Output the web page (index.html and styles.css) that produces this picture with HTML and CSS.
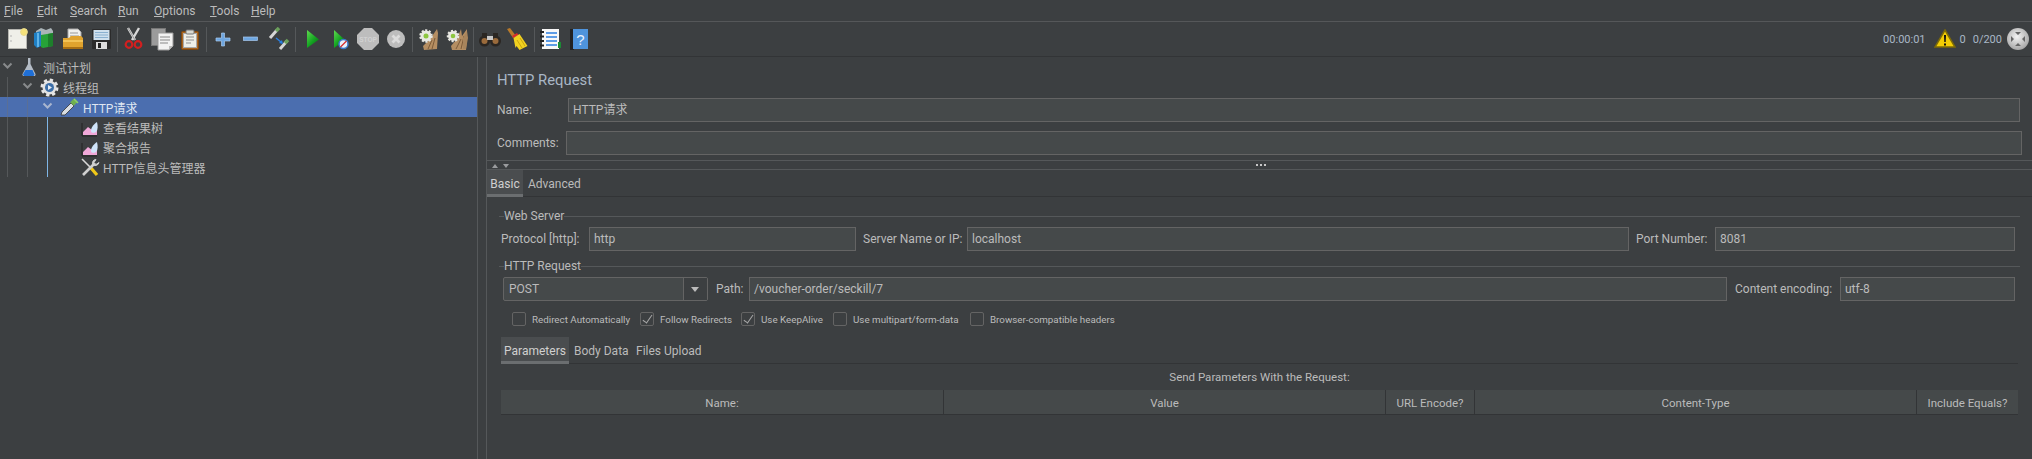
FILE: index.html
```html
<!DOCTYPE html>
<html lang="en">
<head>
<meta charset="utf-8">
<title>Apache JMeter</title>
<link rel="stylesheet" href="styles.css">
</head>
<body>
<nav class="menubar">
  <span class="m-file"><u>F</u>ile</span><span class="m-edit"><u>E</u>dit</span><span class="m-search"><u>S</u>earch</span><span class="m-run"><u>R</u>un</span><span class="m-options"><u>O</u>ptions</span><span class="m-tools"><u>T</u>ools</span><span><u>H</u>elp</span>
</nav>
<div class="toolbar">
  <svg width="27" height="24" viewBox="-4 0 27 24"><rect x="0.5" y="2.5" width="18" height="19" fill="#efefe9" stroke="#b5b5b0"/><circle cx="3" cy="9" r=".8" fill="#aaa"/><circle cx="3" cy="14" r=".8" fill="#aaa"/><circle cx="16" cy="5" r="3.400" fill="#f5e27a" stroke="#e8d98a"/></svg>
  <svg width="28" height="24" viewBox="-3 0 28 24"><path d="M2 4l5-3 5 2 5-2 2 3v5H2z" fill="#aab4b8"/><path d="M0 6l7-2v15l-4 2-3-3z" fill="#1f7fc4"/><path d="M3 6h2v14H3z" fill="#5fb3e8"/><path d="M7 8l12-2v13l-10 2-2-1z" fill="#27a238"/><path d="M14 7l5-1v13l-5 1z" fill="#1d7f2b"/></svg>
  <svg width="28" height="24" viewBox="-4 0 28 24"><path d="M5 2h10l3 3v8H5z" fill="#f0f0ec" stroke="#aaa"/><path d="M7 6h8M7 9h9" stroke="#999"/><path d="M0 11h6l2-2h10l2 2v9a2 2 0 0 1-2 2H2a2 2 0 0 1-2-2z" fill="#e0a32e"/><path d="M0 13h20v2H0z" fill="#f2c255"/><path d="M0 20h20v2H0z" fill="#a86f14"/></svg>
  <svg width="29" height="24" viewBox="-5 0 29 24"><rect x="0" y="2" width="19" height="20" rx="1" fill="#2b2b2b"/><rect x="1.5" y="3" width="16" height="10" fill="#cfe0ee"/><path d="M3 5.500h13M3 8h13M3 10.500h13" stroke="#8ab0d0"/><rect x="4" y="15" width="11" height="7" fill="#ddd"/><rect x="6" y="16" width="3" height="5" fill="#222"/></svg>
  <i class="sep"></i>
  <svg width="29" height="24" viewBox="-6 0 29 24"><path d="M3 1l7 12M14 1L7 13" stroke="#d8d8d8" stroke-width="2.400"/><path d="M3 1l7 12" stroke="#8a8a8a" stroke-width=".8"/><circle cx="4" cy="17.500" r="3.300" fill="none" stroke="#d21f1f" stroke-width="2.200"/><circle cx="13" cy="17.500" r="3.300" fill="none" stroke="#d21f1f" stroke-width="2.200"/></svg>
  <svg width="29" height="24" viewBox="-3 0 29 24"><rect x="0.500" y="1.500" width="14" height="17" fill="#9b9b9b" stroke="#777"/><path d="M7 6h15v13l-4 4H7z" fill="#f2f2f2" stroke="#999"/><path d="M9 10h10M9 13h10M9 16h8" stroke="#888"/><path d="M18 23v-4h4z" fill="#bbb"/></svg>
  <svg width="28" height="24" viewBox="-4 0 28 24"><rect x="0.500" y="4.500" width="17" height="18" rx="1" fill="#a9651f" stroke="#7c4712"/><rect x="2.500" y="6.500" width="13" height="14" fill="#efefe8" stroke="#aaa"/><rect x="5" y="3" width="8" height="4" rx="1" fill="#d9d9d2" stroke="#777"/><path d="M5 10h8M5 13h8M5 16h5" stroke="#8f8f8f"/></svg>
  <i class="sep"></i>
  <svg width="29" height="24" viewBox="-8 0 29 24"><path d="M5.500 6h3v5h5.500v3H8.500v5h-3v-5H0v-3h5.500z" fill="#6ea6e0" stroke="#a8c9ee" stroke-width=".7"/></svg>
  <svg width="28" height="24" viewBox="-6 0 28 24"><rect x="0.500" y="10" width="14" height="3.500" fill="#6ea6e0" stroke="#a8c9ee" stroke-width=".7"/></svg>
  <svg width="29" height="24" viewBox="-4 0 29 24"><path d="M1 11l7-8" stroke="#d6d6d6" stroke-width="3"/><path d="M7 4l3-3" stroke="#6ca05c" stroke-width="3.500"/><path d="M11 22l7-8" stroke="#d6d6d6" stroke-width="3"/><path d="M16 16l3-3" stroke="#6ca05c" stroke-width="3.500"/><path d="M7 11l5 4" stroke="#2a7fe0" stroke-width="1.500"/><path d="M14 17l-1-4-3 3z" fill="#2a7fe0"/></svg>
  <i class="sep"></i>
  <svg width="30" height="24" viewBox="-10 0 30 24"><defs><linearGradient id="pl" x1="0" y1="0" x2=".8" y2="1"><stop offset="0" stop-color="#5fdc4e"/><stop offset=".6" stop-color="#14a322"/><stop offset="1" stop-color="#0a6a14"/></linearGradient></defs><path d="M0 3l12 9.500L0 21z" fill="url(#pl)"/></svg>
  <svg width="27" height="24" viewBox="-7 0 27 24"><path d="M0 3l11 10L0 21z" fill="url(#pl)"/><circle cx="9.500" cy="17" r="4.500" fill="#e8f0fa" stroke="#3a78c8" stroke-width="1.500"/><path d="M6.500 20l6-6" stroke="#d62c2c" stroke-width="1.300"/></svg>
  <svg width="29" height="24" viewBox="-3 0 29 24"><path d="M7 1h8l7 7v8l-7 7H7l-7-7V8z" fill="#bdbdbd"/><text x="11" y="14.500" class="stop-text" text-anchor="middle">STOP</text></svg>
  <svg width="28" height="24" viewBox="-4 0 28 24"><circle cx="9" cy="12" r="9" fill="#bdbdbd"/><path d="M5.500 8.500l7 7m0-7l-7 7" stroke="#dcdcdc" stroke-width="2.800"/></svg>
  <i class="sep"></i>
  <svg width="28" height="24" viewBox="-4 0 28 24"><path d="M19 2l1 4-1 16-13 1-1-4 7-7z" fill="#b58e62"/><path d="M10 22l4-9M14 22l3-11" stroke="#7c5b39"/><circle cx="8" cy="9" r="5.500" fill="#e8e8e2" stroke="#e8e8e2" stroke-width="2.500" stroke-dasharray="2 1.500"/><circle cx="8" cy="9" r="2.500" fill="#8cc63f"/></svg>
  <svg width="30" height="24" viewBox="-4 0 30 24"><path d="M6 23l-1-4 6-7 4-10 1 7 5-7v11l-1 10z" fill="#b58e62"/><path d="M10 22l5-10M15 22l3-13" stroke="#7c5b39"/><path d="M17 11l4-7 1 7-2 11h-3z" fill="#a9855c"/><circle cx="7" cy="9" r="5" fill="#e8e8e2" stroke="#e8e8e2" stroke-width="2.500" stroke-dasharray="2 1.500"/><circle cx="7" cy="9" r="2.300" fill="#8cc63f"/></svg>
  <i class="sep"></i>
  <svg width="29" height="24" viewBox="-4 0 29 24"><circle cx="5.500" cy="14" r="5.500" fill="#2a2622"/><circle cx="16.500" cy="14" r="5.500" fill="#2a2622"/><circle cx="5.500" cy="14" r="3" fill="#9a6b3c"/><circle cx="16.500" cy="14" r="3" fill="#9a6b3c"/><rect x="3" y="6" width="5" height="5" fill="#2a2622"/><rect x="14" y="6" width="5" height="5" fill="#2a2622"/><rect x="8" y="9" width="6" height="4" fill="#c8c8c8"/></svg>
  <svg width="29" height="24" viewBox="-2 0 29 24"><path d="M1 2l3-1 6 8-3 2z" fill="#b97a2a"/><path d="M6 9l5-3 1.500 2-5 3z" fill="#d62c2c"/><path d="M7.500 11l6-4 8 12-8 4-3-4-1 2z" fill="#f2d21f"/><path d="M11 13l5 8M14 11l5 8" stroke="#c8a412"/></svg>
  <i class="sep"></i>
  <svg width="30" height="24" viewBox="-4 0 30 24"><rect x="2" y="2" width="17" height="20" fill="#f7f7f7"/><path d="M6 6h11M6 10h11M6 14h11M6 18h11" stroke="#2d7fe0" stroke-width="1.500"/><path d="M0 5h4M0 9.500h4M0 14h4M0 18.500h4" stroke="#222" stroke-width="2"/><rect x="18" y="15" width="3" height="6" fill="#1c8a35"/></svg>
  <svg width="29" height="24" viewBox="-4 0 29 24"><rect x="0" y="2" width="4" height="21" fill="#222"/><rect x="3" y="2" width="15" height="20" fill="#4f94dc"/><text x="10.500" y="18" class="help-text" text-anchor="middle">?</text></svg>
  <div class="status">
    <span class="time">00:00:01</span>
    <svg width="22" height="20" viewBox="0 0 22 20"><path d="M11 1l10 17H1z" fill="#f3cd05" stroke="#7c6a08" stroke-width="1.500"/><path d="M10 6h2l-.3 7h-1.400zM10 14.500h2v2h-2z" fill="#111"/></svg>
    <span class="warn-count">0</span>
    <span class="threads">0/200</span>
    <svg width="22" height="22" viewBox="0 0 22 22"><defs><radialGradient id="gl" cx=".45" cy=".4" r=".7"><stop offset="0" stop-color="#f4f4f4"/><stop offset="1" stop-color="#9a9a9a"/></radialGradient></defs><circle cx="11" cy="11" r="11" fill="url(#gl)"/><path d="M8 4h6l-3 3zM8 18h6l-3-3zM4 8v6l3-3zM18 8v6l-3-3z" fill="#666"/></svg>
  </div>
</div>
<div class="workspace">
  <aside class="tree">
    <div class="row">
      <svg class="chev" width="20" height="20" viewBox="0 0 20 20"><path d="M3.500 6.500l4 4 4-4"/></svg>
      <svg class="node" width="23" height="20" viewBox="0 0 23 20"><path d="M8 1h2.500v6l5 10a1.500 1.500 0 0 1-1.500 2H4a1.500 1.500 0 0 1-1.500-2l5.500-10z" fill="#b4bcc6"/><path d="M5.500 13h7l2 4.500-1 1.500H4l-1-1.500z" fill="#1f6fd6"/></svg>
      <span>测试计划</span>
    </div>
    <div class="row">
      <i class="guide"></i>
      <svg class="chev" width="20" height="20" viewBox="0 0 20 20"><path d="M3.500 6.500l4 4 4-4"/></svg>
      <svg class="node" width="23" height="20" viewBox="0 0 23 20"><circle cx="9.500" cy="10.500" r="7" fill="#dcdcdc" stroke="#e6e6e6" stroke-width="4" stroke-dasharray="3 2.500"/><circle cx="9.500" cy="10.500" r="6.500" fill="#e2e2e2"/><circle cx="9.500" cy="10.500" r="4.500" fill="#3d6fa8"/><path d="M8 8l4 2.500-4 2.500z" fill="#e8eef5"/></svg>
      <span>线程组</span>
    </div>
    <div class="row selected">
      <i class="guide"></i><i class="guide"></i>
      <svg class="chev" width="20" height="20" viewBox="0 0 20 20"><path d="M3.500 6.500l4 4 4-4"/></svg>
      <svg class="node" width="23" height="20" viewBox="0 0 23 20"><path d="M1 18l1-3L11 6l3 3-9 9z" fill="#d8dde2" stroke="#333" stroke-width=".8"/><path d="M12 7l4-4" stroke="#6fb04e" stroke-width="5"/><path d="M14 2l4 4" stroke="#8fd06a" stroke-width="1.500"/></svg>
      <span>HTTP请求</span>
    </div>
    <div class="row">
      <i class="guide"></i><i class="guide"></i><i class="guide blue"></i><i class="indent"></i>
      <svg class="node" width="23" height="20" viewBox="0 0 23 20"><path d="M2 6v13h15" fill="none" stroke="#222"/><path d="M3 18v-3l5-5 4 3h5v5z" fill="#f0a8d8"/><path d="M11 14c0-4 3-7 6-9 1 4 1 8-1 10-2 1.500-5 1-5-1z" fill="#cfe4fa"/></svg>
      <span>查看结果树</span>
    </div>
    <div class="row">
      <i class="guide"></i><i class="guide"></i><i class="guide blue"></i><i class="indent"></i>
      <svg class="node" width="23" height="20" viewBox="0 0 23 20"><path d="M2 6v13h15" fill="none" stroke="#222"/><path d="M3 18v-3l5-5 4 3h5v5z" fill="#f0a8d8"/><path d="M11 14c0-4 3-7 6-9 1 4 1 8-1 10-2 1.500-5 1-5-1z" fill="#cfe4fa"/></svg>
      <span>聚合报告</span>
    </div>
    <div class="row">
      <i class="guide"></i><i class="guide"></i><i class="guide blue"></i><i class="indent"></i>
      <svg class="node" width="23" height="20" viewBox="0 0 23 20"><path d="M2 2l9 9" stroke="#d8d8d8" stroke-width="1.600"/><path d="M11 11l6 7" stroke="#f0c818" stroke-width="3.200"/><path d="M3 18L14 7" stroke="#d0d0d0" stroke-width="2.600"/><path d="M13 8a4 4 0 0 1 1-5l2-.500-2 3 2 2 3-2a4 4 0 0 1-6 2.500z" fill="#d0d0d0" stroke="#d0d0d0"/></svg>
      <span>HTTP信息头管理器</span>
    </div>
  </aside>
  <main class="detail">
    <h1 class="title">HTTP Request</h1>
    <div class="name-row"><label class="name-label">Name:</label><div class="field">HTTP请求</div></div>
    <div class="comments-row"><label class="comments-label">Comments:</label><div class="field"></div></div>
    <div class="split">
      <span class="arrows"><i class="up"></i><i class="down"></i></span>
      <span class="grip"></span>
    </div>
    <div class="tabs outer-tabs">
      <span class="tab active basic">Basic</span><span class="tab adv">Advanced</span>
    </div>
    <section class="group">
      <div class="legend"><span>Web Server</span></div>
      <div class="fields server-fields">
        <label class="l-protocol">Protocol [http]:</label><div class="field protocol">http</div>
        <label class="l-server">Server Name or IP:</label><div class="field server">localhost</div>
        <label class="l-port">Port Number:</label><div class="field port">8081</div>
      </div>
      <div class="legend second"><span>HTTP Request</span></div>
      <div class="fields request-fields">
        <div class="combo"><span>POST</span><b class="combo-arrow"></b></div>
        <label class="l-path">Path:</label><div class="field path">/voucher-order/seckill/7</div>
        <label class="l-encoding">Content encoding:</label><div class="field encoding">utf-8</div>
      </div>
    </section>
    <div class="checks">
      <span class="check c1"><i></i>Redirect Automatically</span>
      <span class="check c2"><i class="on"></i>Follow Redirects</span>
      <span class="check c3"><i class="on"></i>Use KeepAlive</span>
      <span class="check c4"><i></i>Use multipart/form-data</span>
      <span class="check"><i></i>Browser-compatible headers</span>
    </div>
    <section class="params">
      <div class="tabs inner-tabs">
        <span class="tab active parameters">Parameters</span><span class="tab body-tab">Body Data</span><span class="tab files-tab">Files Upload</span>
      </div>
      <div class="caption">Send Parameters With the Request:</div>
      <div class="table-head">
        <span>Name:</span><span>Value</span><span>URL Encode?</span><span>Content-Type</span><span>Include Equals?</span>
      </div>
    </section>
  </main>
</div>
</body>
</html>
```

FILE: styles.css
```css
* { box-sizing: border-box; }
html, body { margin: 0; height: 100%; }
body {
  width: 2032px;
  height: 459px;
  overflow: hidden;
  background: #3c3f41;
  color: #bbbbbb;
  font: 12px Roboto, "Noto Sans CJK SC", sans-serif;
}
i { font-style: normal; display: block; }
label { white-space: nowrap; flex: none; }

.menubar {
  height: 22px;
  display: flex;
  align-items: center;
  padding-left: 4px;
  border-bottom: 1px solid #555759;
  font-size: 12px;
}
.m-file { width: 33px; }
.m-edit { width: 33px; }
.m-search { width: 48px; }
.m-run { width: 36px; }
.m-options { width: 56px; }
.m-tools { width: 41px; }
.toolbar {
  height: 35px;
  display: flex;
  align-items: center;
  padding-left: 4px;
  border-bottom: 1px solid #323436;
}
.toolbar svg { flex: none; display: block; }
.sep { width: 1px; height: 25px; margin: 0 1px; background: #55585a; flex: none; }
.stop-text { font: bold 6.500px "Liberation Sans", sans-serif; fill: #d2d2d2; }
.help-text { font: 15px "Liberation Sans", sans-serif; fill: #e8f2fc; }
.status { margin-left: auto; display: flex; align-items: center; padding-right: 3px; font-size: 11px; color: #a9b7c6; }
.time { margin-right: 8px; }
.warn-count { margin: 0 7px 0 4px; }
.threads { margin-right: 5px; }

.workspace { display: flex; height: 402px; }
.tree { width: 477px; flex: none; }
.row { display: flex; align-items: center; height: 20px; }
.row span { white-space: nowrap; padding-top: 1px; }
.row svg { flex: none; }
.selected { background: #4b6eaf; color: #dfe6f2; }
.guide {
  width: 20px;
  height: 20px;
  flex: none;
  background: linear-gradient(#55585a, #55585a) 7px 0 / 1px 100% no-repeat;
}
.guide.blue { background-image: linear-gradient(#7fb6e6, #7fb6e6); }
.selected .guide { background-image: linear-gradient(#5a6f96, #5a6f96); }
.indent { width: 20px; flex: none; }
.chev path { fill: none; stroke: #888a8c; stroke-width: 2; }
.selected .chev path { stroke: #a9b6cf; }

.detail {
  flex: 1;
  border-left: 1px solid #55585a;
  padding-left: 9px;
  background: linear-gradient(#55585a, #55585a) 8px 0 / 1px 100% no-repeat;
  min-width: 0;
  display: flex;
  flex-direction: column;
}
.title {
  margin: 0;
  height: 41px;
  padding: 13px 0 0 10px;
  font-size: 14.800px;
  line-height: 20px;
  font-weight: 400;
  color: #a9b7c6;
}
.name-row, .comments-row { display: flex; align-items: center; height: 24px; }
.name-row { padding: 0 12px 0 10px; }
.comments-row { padding: 0 10px 0 10px; margin-top: 9px; }
.name-label { width: 71px; flex: none; }
.comments-label { width: 69px; flex: none; }
.field {
  flex: none;
  height: 24px;
  line-height: 22px;
  padding: 0 4px;
  background: #45494a;
  border: 1px solid #646464;
  white-space: nowrap;
}
.name-row .field, .comments-row .field { flex: 1; }

.split {
  margin-top: 5px;
  height: 10px;
  border-top: 1px solid #55585a;
  border-bottom: 1px solid #55585a;
  display: flex;
  align-items: center;
  position: relative;
}
.arrows { display: flex; gap: 5px; padding: 1px 0 0 5px; }
.up { border: 3.500px solid transparent; border-top: 0; border-bottom: 4px solid #9a9c9e; }
.down { border: 3.500px solid transparent; border-bottom: 0; border-top: 4px solid #9a9c9e; }
.grip {
  position: absolute;
  left: 768px;
  top: 3px;
  width: 11px;
  height: 2px;
  background: radial-gradient(circle, #c8c8c8 0 1px, transparent 1px) 0 0 / 4px 2px repeat-x;
}
.tabs { display: flex; align-items: stretch; border-bottom: 1px solid #323436; }
.outer-tabs { height: 27px; }
.tab { padding: 1px 3px 0; display: flex; align-items: center; white-space: nowrap; }
.tab.active { background: #4a4d4f; border-bottom: 3px solid #6b6e70; margin-bottom: -1px; padding: 3px 0 0; color: #d0d0d0; }
.basic { width: 36px; justify-content: center; }
.adv { padding-left: 5px; }

.group { margin: 12px 12px 0; }
.legend { display: flex; align-items: center; height: 14px; }
.legend::before { content: ""; width: 5px; height: 1px; background: #55585a; }
.legend::after { content: ""; flex: 1; height: 1px; background: #55585a; }
.legend.second { margin-top: 8px; }
.fields { display: flex; align-items: center; height: 24px; margin: 4px 5px 0 2px; }
.l-protocol { width: 88px; }
.protocol { width: 267px; margin-right: 7px; }
.l-server { width: 104px; }
.server { width: 662px; margin-right: 7px; }
.l-port { width: 79px; }
.port { width: 300px; }
.request-fields { margin-left: 4px; }
.combo {
  width: 205px;
  height: 24px;
  flex: none;
  margin-right: 8px;
  background: #45494a;
  border: 1px solid #646464;
  border-radius: 2px;
  padding-left: 5px;
  display: flex;
  align-items: center;
  justify-content: space-between;
}
.combo-arrow {
  width: 24px;
  height: 22px;
  border-left: 1px solid #646464;
  background: #3c3f41;
  position: relative;
}
.combo-arrow::after {
  content: "";
  position: absolute;
  left: 7px;
  top: 9px;
  border: 4px solid transparent;
  border-bottom: 0;
  border-top: 5px solid #bbbbbb;
}
.l-path { width: 33px; }
.path { width: 978px; margin-right: 8px; }
.l-encoding { width: 105px; }
.encoding { width: 175px; }

.checks { display: flex; align-items: center; height: 14px; margin: 11px 0 0 25px; font-size: 9.800px; }
.check { display: flex; align-items: center; gap: 6px; white-space: nowrap; }
.c1 { width: 128px; }
.c2 { width: 101px; }
.c3 { width: 92px; }
.c4 { width: 137px; }
.check i { width: 14px; height: 14px; border: 1px solid #646464; border-radius: 2px; background: #3c3f41; flex: none; position: relative; }
.check i.on::after {
  content: "";
  position: absolute;
  left: 4px;
  top: 0;
  width: 4px;
  height: 9px;
  border: solid #a9a9a9;
  border-width: 0 1.500px 1.500px 0;
  transform: rotate(35deg);
}
.params { margin: 11px 14px 0; display: flex; flex-direction: column; }
.inner-tabs { height: 27px; }
.parameters { width: 68px; justify-content: center; }
.body-tab { padding: 1px 0 0 5px; width: 64px; }
.caption { height: 26px; line-height: 26px; text-align: center; font-size: 11.500px; }
.table-head {
  display: grid;
  grid-template-columns: 443px 442px 89px 442px 1fr;
  height: 25px;
  background: #45494a;
  border-bottom: 1px solid #323436;
}
.table-head span {
  display: flex;
  align-items: center;
  justify-content: center;
  border-right: 1px solid #323436;
  white-space: nowrap;
  font-size: 11.500px;
  padding-top: 1px;
}
.table-head span:last-child { border-right: 0; }
u { text-underline-offset: 1px; }
```
